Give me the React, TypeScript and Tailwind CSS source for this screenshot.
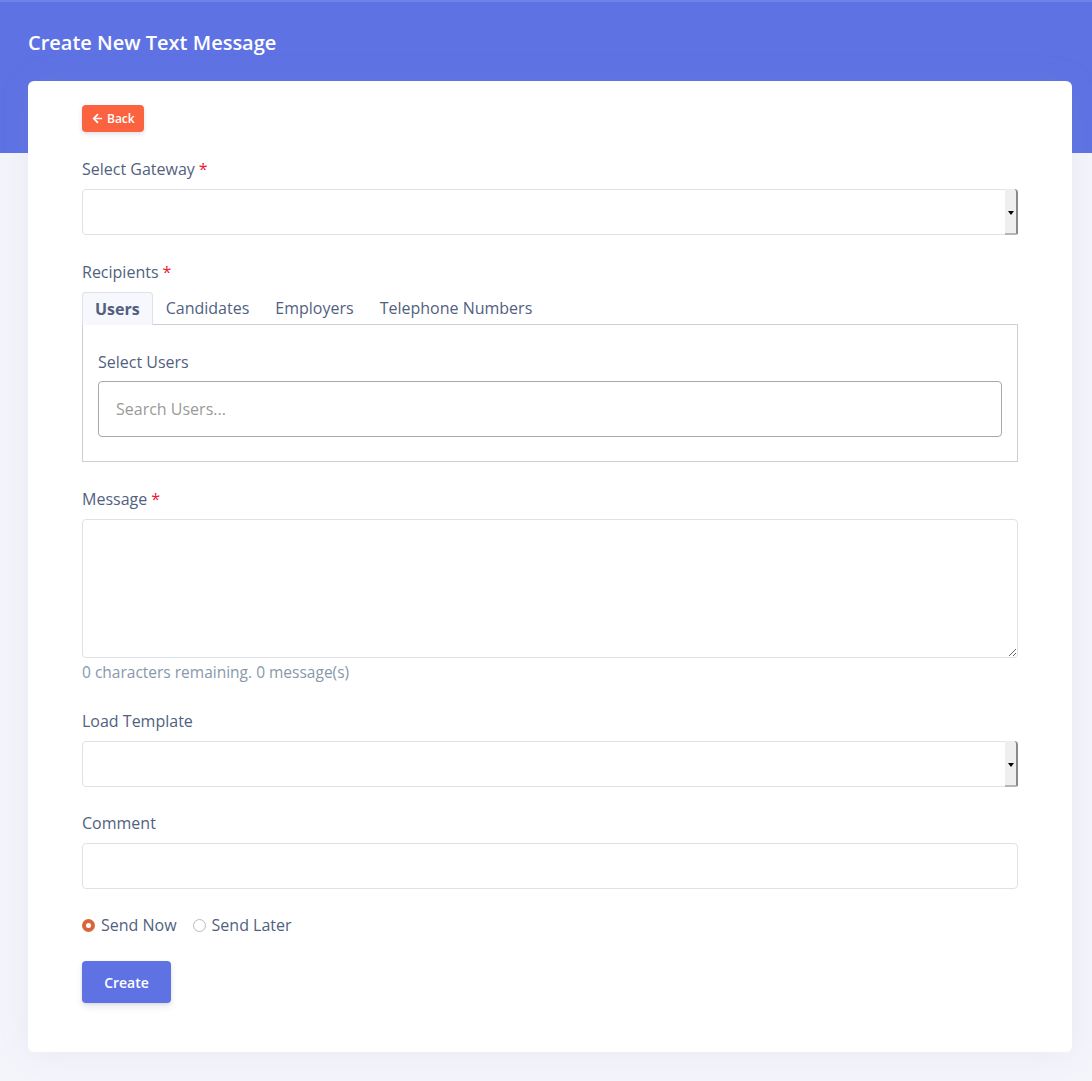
import { ArrowLeft } from "lucide-react";
import { useState } from "react";

const tabs = ["Users", "Candidates", "Employers", "Telephone Numbers"];

function Label({ text, required }: { text: string; required?: boolean }) {
  return (
    <label className="block text-[16px] leading-[22px] text-[#525f7f] mb-[9px]">
      {text}
      {required && <span className="text-[#f0142f] ml-1">*</span>}
    </label>
  );
}

function SelectBox() {
  return (
    <div className="h-[46px] flex border border-[#dee2e6] rounded-[4px] bg-white">
      <div className="flex-1" />
      <div className="w-[13px] -my-px -mr-px bg-[#efefef] border-r-2 border-b-2 border-r-[#8a8a8a] border-b-[#b5b5b5] rounded-tr-[4px] rounded-br-[2px] flex items-center justify-center">
        <span className="block w-0 h-0 border-l-[3px] border-r-[3px] border-t-[4px] border-l-transparent border-r-transparent border-t-black mt-1" />
      </div>
    </div>
  );
}

function Radio({ label, checked, onPick }: { label: string; checked: boolean; onPick: () => void }) {
  return (
    <label className="flex items-center gap-[6px] cursor-pointer" onClick={onPick}>
      <span
        className={
          checked
            ? "w-[13px] h-[13px] rounded-full border-[4px] border-[#d9663a] bg-white"
            : "w-[13px] h-[13px] rounded-full border border-[#bcbcbc] bg-white"
        }
      />
      {label}
    </label>
  );
}

export default function App() {
  const [tab, setTab] = useState("Users");
  const [sendNow, setSendNow] = useState(true);

  return (
    <div className="min-h-[1081px] bg-[#f4f5fb] font-['Open_Sans',sans-serif]">
      <div className="h-[153px] bg-[#5e72e4] border-t-2 border-[#6f82ec] px-7 pt-[27px]">
        <h1 className="text-[20px] leading-[27px] font-semibold text-white">Create New Text Message</h1>
      </div>

      <div className="-mt-[72px] ml-7 mr-5 bg-white rounded-[6px] shadow-[0_0_30px_rgba(136,152,170,0.12)] px-[54px] pt-6 pb-[49px]">
        <button className="h-[27px] px-[9px] flex items-center gap-[3px] bg-[#fb6340] text-white text-[12px] font-semibold rounded-[4px] shadow-[0_2px_4px_rgba(50,50,93,0.15)]">
          <ArrowLeft size={13} strokeWidth={3.2} />
          Back
        </button>

        <div className="mt-[26px]">
          <Label text="Select Gateway" required />
          <SelectBox />
        </div>

        <div className="mt-[26px]">
          <label className="block text-[16px] leading-[22px] text-[#525f7f] mb-[8px]">
            Recipients<span className="text-[#f0142f] ml-1">*</span>
          </label>
          <div className="flex h-[33px]">
            {tabs.map((t) => (
              <button
                key={t}
                onClick={() => setTab(t)}
                className={
                  t === tab
                    ? "px-3 text-[16px] font-bold text-[#525f7f] bg-[#f6f8fd] border border-b-0 border-[#dee2e6] rounded-t-[4px] relative top-px"
                    : "px-[13px] text-[16px] text-[#525f7f]"
                }
              >
                {t}
              </button>
            ))}
          </div>
          <div className="border border-[#cfcfcf] px-[15px] pt-[26px] pb-6">
            <label className="block text-[16px] leading-[22px] text-[#525f7f] mb-2">Select Users</label>
            <input
              className="block w-full h-[56px] px-[17px] border border-[#a8a8a8] rounded-[4px] text-[16px] text-[#525f7f] placeholder:text-[#9a9a9a] outline-none"
              placeholder="Search Users..."
            />
          </div>
        </div>

        <div className="mt-[26px]">
          <Label text="Message" required />
          <textarea className="block w-full h-[139px] border border-[#dee2e6] rounded-[4px] outline-none p-3 text-[15px]" />
          <p className="mt-[3px] text-[15.5px] leading-[22px] text-[#8898aa]">0 characters remaining. 0 message(s)</p>
        </div>

        <div className="mt-[27px]">
          <Label text="Load Template" />
          <SelectBox />
        </div>

        <div className="mt-[25px]">
          <Label text="Comment" />
          <input className="block w-full h-[46px] border border-[#dee2e6] rounded-[4px] outline-none px-3 text-[15px]" />
        </div>

        <div className="mt-[25px] flex items-center gap-4 text-[16px] leading-[22px] text-[#525f7f]">
          <Radio label="Send Now" checked={sendNow} onPick={() => setSendNow(true)} />
          <Radio label="Send Later" checked={!sendNow} onPick={() => setSendNow(false)} />
        </div>

        <button className="mt-[25px] h-[42px] w-[89px] bg-[#5e72e4] text-white text-[14px] font-semibold rounded-[4px] shadow-[0_4px_6px_rgba(50,50,93,0.11),0_1px_3px_rgba(0,0,0,0.08)]">
          Create
        </button>
      </div>
    </div>
  );
}
